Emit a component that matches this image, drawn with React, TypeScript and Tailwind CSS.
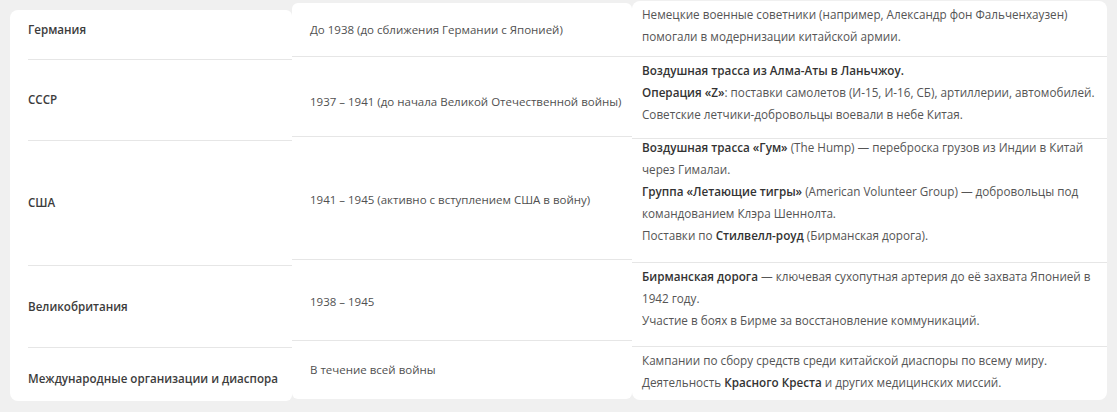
import React from "react";

const font = { fontFamily: '"Open Sans", "Noto Sans", Arial, sans-serif' };

const B = ({ children }: { children: React.ReactNode }) => (
  <span className="font-semibold text-[#333]">{children}</span>
);

type Row = { h: string; cls?: string; content: React.ReactNode };

const col1: Row[] = [
  { h: "h-[50px]", cls: "pb-[10px]", content: "Германия" },
  { h: "h-[81px]", content: "СССР" },
  { h: "h-[125px]", content: "США" },
  { h: "h-[82px]", content: "Великобритания" },
  { h: "h-[53px]", cls: "pt-[9px]", content: "Международные организации и диаспора" },
];

const col2: Row[] = [
  { h: "h-[54px]", content: "До 1938 (до сближения Германии с Японией)" },
  { h: "h-[80px]", cls: "pt-[10px]", content: "1937 – 1941 (до начала Великой Отечественной войны)" },
  { h: "h-[123px]", cls: "pt-[3px]", content: "1941 – 1945 (активно с вступлением США в войну)" },
  { h: "h-[81px]", cls: "pt-[3px]", content: "1938 – 1945" },
  { h: "h-[58px]", content: "В течение всей войны" },
];

const col3: Row[] = [
  {
    h: "h-[56px]",
    cls: "pt-[2px]",
    content: (
      <>
        <div>Немецкие военные советники (например, Александр фон Фальченхаузен)</div>
        <div>помогали в модернизации китайской армии.</div>
      </>
    ),
  },
  {
    h: "h-[82px]",
    cls: "pt-[2px]",
    content: (
      <>
        <div><B>Воздушная трасса из Алма-Аты в Ланьчжоу.</B></div>
        <div><B>Операция «Z»</B>: поставки самолетов (И-15, И-16, СБ), артиллерии, автомобилей.</div>
        <div>Советские летчики-добровольцы воевали в небе Китая.</div>
      </>
    ),
  },
  {
    h: "h-[124px]",
    cls: "pt-0 [&>div:first-child]:-mt-[3px]",
    content: (
      <>
        <div><B>Воздушная трасса «Гум»</B> (The Hump) — переброска грузов из Индии в Китай</div>
        <div>через Гималаи.</div>
        <div><B>Группа «Летающие тигры»</B> (American Volunteer Group) — добровольцы под</div>
        <div>командованием Клэра Шеннолта.</div>
        <div>Поставки по <B>Стилвелл-роуд</B> (Бирманская дорога).</div>
      </>
    ),
  },
  {
    h: "h-[84px]",
    cls: "pt-[2px]",
    content: (
      <>
        <div><B>Бирманская дорога</B> — ключевая сухопутная артерия до её захвата Японией в</div>
        <div>1942 году.</div>
        <div>Участие в боях в Бирме за восстановление коммуникаций.</div>
      </>
    ),
  },
  {
    h: "h-[53px]",
    cls: "pt-[2px]",
    content: (
      <>
        <div>Кампании по сбору средств среди китайской диаспоры по всему миру.</div>
        <div>Деятельность <B>Красного Креста</B> и других медицинских миссий.</div>
      </>
    ),
  },
];

export default function App() {
  return (
    <div
      className="w-[1117px] h-[412px] bg-[#f0f0f0] flex items-start pl-[10px] overflow-hidden"
      style={font}
    >
      {/* Column 1 */}
      <div className="mt-[10px] w-[282px] bg-white rounded-l-[8px] rounded-r-[6px] pl-[18px] flex flex-col">
        {col1.map((r, i) => (
          <div
            key={i}
            className={`${r.h} ${r.cls ?? ""} flex items-center ${
              i < col1.length - 1 ? "border-b border-[#e6e6e6]" : ""
            } text-[11.6px] font-semibold text-[#3c3c3c] whitespace-nowrap`}
          >
            {r.content}
          </div>
        ))}
      </div>

      {/* Column 2 */}
      <div className="mt-[3px] w-[340px] bg-white rounded-[6px] flex flex-col">
        {col2.map((r, i) => (
          <div
            key={i}
            className={`${r.h} ${r.cls ?? ""} px-[18px] flex items-center ${
              i < col2.length - 1 ? "border-b border-[#e6e6e6]" : ""
            } text-[11.5px] text-[#505050] whitespace-nowrap`}
          >
            {r.content}
          </div>
        ))}
      </div>

      {/* Column 3 */}
      <div className="mt-[1px] w-[475px] bg-white rounded-[8px] flex flex-col">
        {col3.map((r, i) => (
          <div
            key={i}
            className={`${r.h} ${r.cls ?? ""} pl-[10px] ${
              i < col3.length - 1 ? "border-b border-[#e6e6e6]" : ""
            } text-[11.7px] leading-[22px] text-[#555] whitespace-nowrap`}
          >
            {r.content}
          </div>
        ))}
      </div>
    </div>
  );
}
